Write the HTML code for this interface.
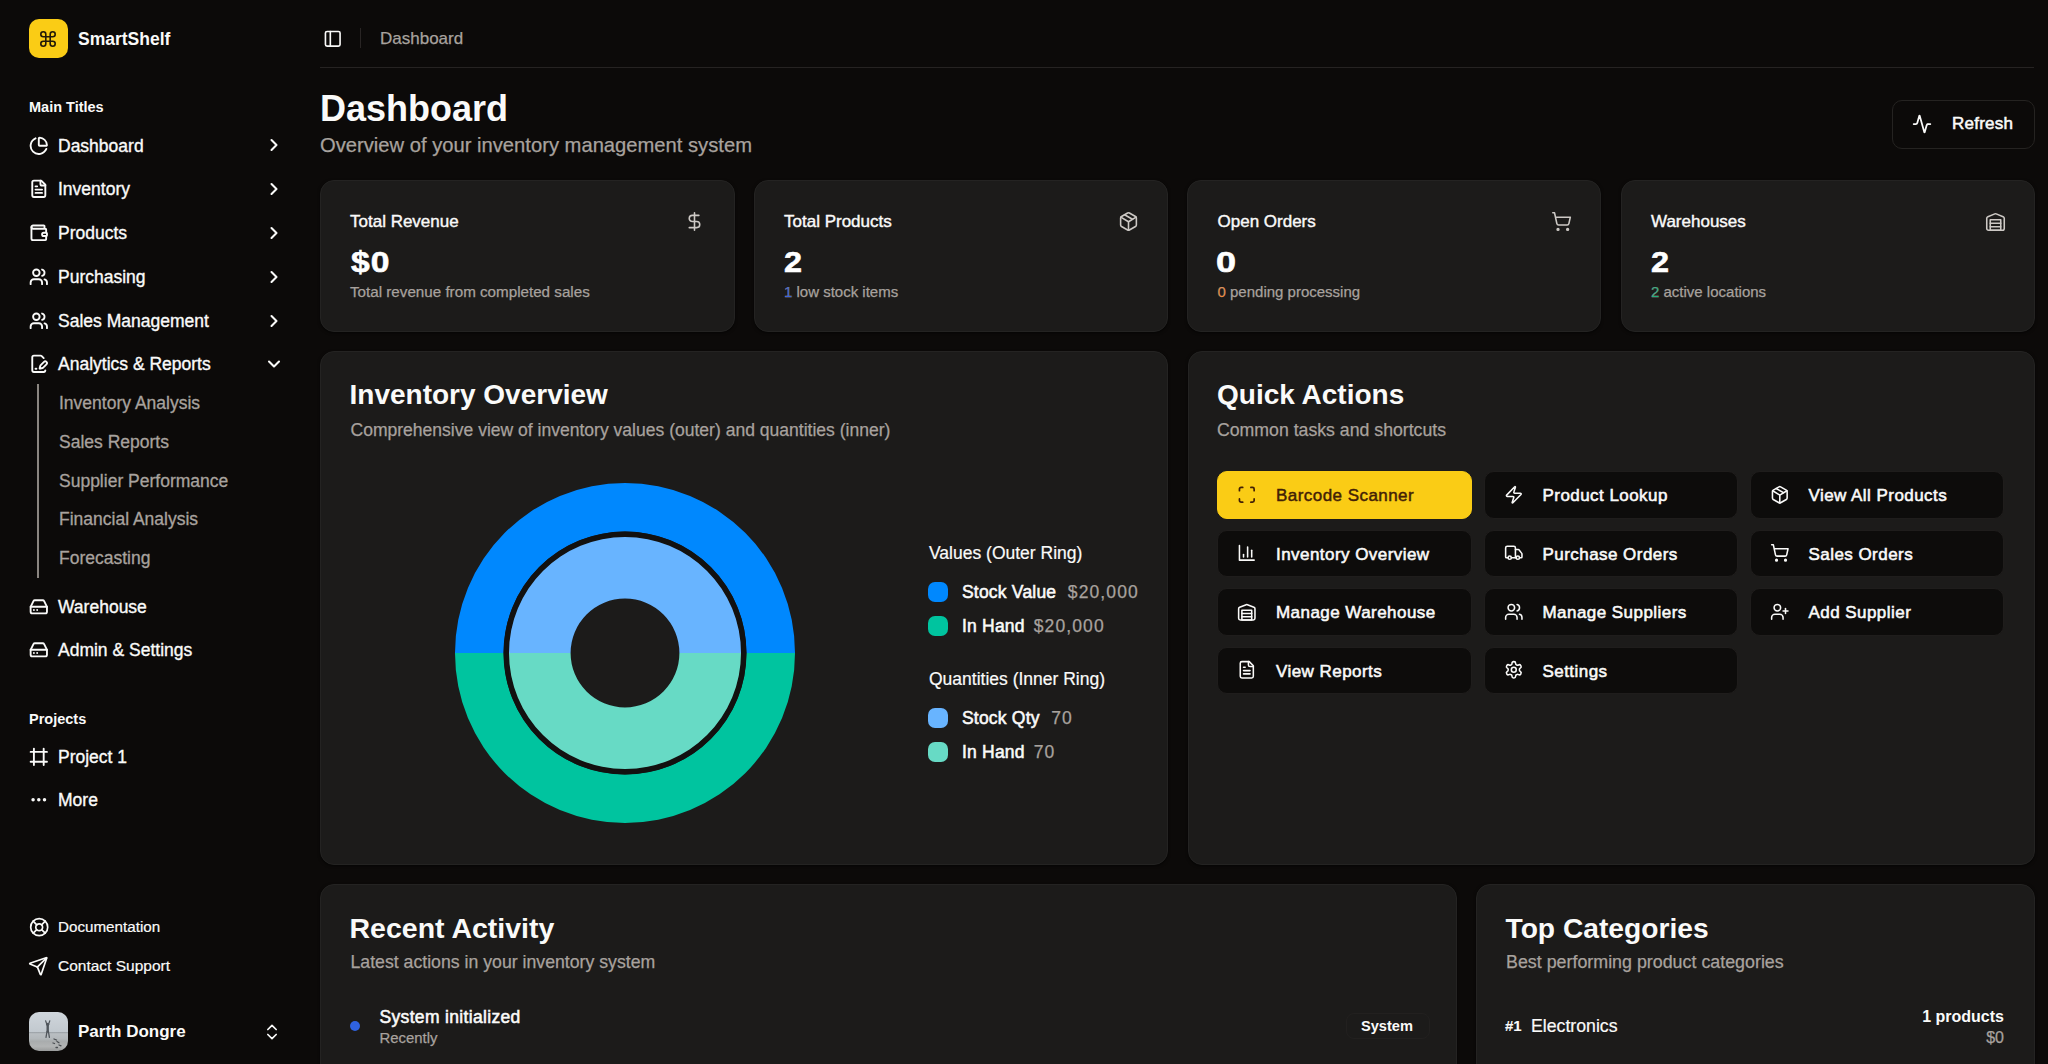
<!DOCTYPE html>
<html><head><meta charset="utf-8">
<style>
*{box-sizing:border-box;margin:0;padding:0}
html,body{width:2048px;height:1064px;overflow:hidden;background:#0c0a09;font-family:"Liberation Sans",sans-serif;color:#fafaf9}
.a{position:absolute;white-space:nowrap}
svg.i{position:absolute;fill:none;stroke:currentColor;stroke-width:2;stroke-linecap:round;stroke-linejoin:round}
.nav{font-size:17.5px;line-height:24px;height:24px;-webkit-text-stroke:0.35px #fafaf9}
.sub{font-size:17.5px;line-height:24px;height:24px;color:#a8a29e;-webkit-text-stroke:0.3px #a8a29e}
.gray{color:#a8a29e;-webkit-text-stroke:0.25px #a8a29e}
.card{position:absolute;background:#1c1b1a;border:1px solid #242322;border-radius:14px;box-shadow:0 1px 3px rgba(0,0,0,.6)}
.qb{position:absolute;width:254.5px;height:47.5px;border-radius:10px;background:#0d0c0b;border:1px solid #1f1d1c}
.qb span{position:absolute;left:58px;top:12px;font-size:17px;line-height:24px;font-weight:normal;-webkit-text-stroke:0.55px currentColor;letter-spacing:0.45px;white-space:nowrap}
.qb svg{left:19.3px;top:12.8px}
</style></head><body>

<!-- SIDEBAR -->
<div class="a" style="left:29px;top:19px;width:39px;height:39px;border-radius:10px;background:#facc15"></div>
<svg class="i" style="left:40.3px;top:30.7px;color:#231a08;stroke-width:1.6" width="16" height="16" viewBox="0 0 16 16"><path d="M10.2 3.3V12.7A2.5 2.5 0 1 0 12.7 10.2H3.3A2.5 2.5 0 1 0 5.8 12.7V3.3A2.5 2.5 0 1 0 3.3 5.8H12.7A2.5 2.5 0 1 0 10.2 3.3"/></svg>
<div class="a" style="left:78px;top:26.5px;font-size:17.5px;line-height:24px;font-weight:bold">SmartShelf</div>

<div class="a" style="left:29px;top:96.5px;font-size:14.5px;line-height:20px;font-weight:bold">Main Titles</div>

<svg class="i" style="left:29.2px;top:135.5px;stroke-width:2.3" width="19.6" height="19.6" viewBox="0 0 24 24"><path d="M21 12c.552 0 1.005-.449.95-.998a10 10 0 0 0-8.953-8.951c-.55-.055-.998.398-.998.95v8a1 1 0 0 0 1 1z"/><path d="M21.21 15.89A10 10 0 1 1 8 2.83"/></svg>
<div class="a nav" style="left:58px;top:133.6px">Dashboard</div>
<svg class="i" style="left:264px;top:135.3px;stroke-width:2.5" width="20" height="20" viewBox="0 0 24 24"><path d="m9 18 6-6-6-6"/></svg>
<svg class="i" style="left:29.2px;top:179.2px;stroke-width:2.3" width="19.6" height="19.6" viewBox="0 0 24 24"><path d="M15 2H6a2 2 0 0 0-2 2v16a2 2 0 0 0 2 2h12a2 2 0 0 0 2-2V7Z"/><path d="M14 2v4a2 2 0 0 0 2 2h4"/><path d="M10 9H8"/><path d="M16 13H8"/><path d="M16 17H8"/></svg>
<div class="a nav" style="left:58px;top:177.3px">Inventory</div>
<svg class="i" style="left:264px;top:179.0px;stroke-width:2.5" width="20" height="20" viewBox="0 0 24 24"><path d="m9 18 6-6-6-6"/></svg>
<svg class="i" style="left:29.2px;top:223.0px;stroke-width:2.3" width="19.6" height="19.6" viewBox="0 0 24 24"><path d="M19 7V4a1 1 0 0 0-1-1H5a2 2 0 0 0 0 4h15a1 1 0 0 1 1 1v4h-3a2 2 0 0 0 0 4h3a1 1 0 0 0 1-1v-2a1 1 0 0 0-1-1"/><path d="M3 5v14a2 2 0 0 0 2 2h15a1 1 0 0 0 1-1v-4"/></svg>
<div class="a nav" style="left:58px;top:221.1px">Products</div>
<svg class="i" style="left:264px;top:222.8px;stroke-width:2.5" width="20" height="20" viewBox="0 0 24 24"><path d="m9 18 6-6-6-6"/></svg>
<svg class="i" style="left:29.2px;top:266.8px;stroke-width:2.3" width="19.6" height="19.6" viewBox="0 0 24 24"><path d="M16 21v-2a4 4 0 0 0-4-4H6a4 4 0 0 0-4 4v2"/><circle cx="9" cy="7" r="4"/><path d="M22 21v-2a4 4 0 0 0-3-3.87"/><path d="M16 3.13a4 4 0 0 1 0 7.75"/></svg>
<div class="a nav" style="left:58px;top:264.9px">Purchasing</div>
<svg class="i" style="left:264px;top:266.6px;stroke-width:2.5" width="20" height="20" viewBox="0 0 24 24"><path d="m9 18 6-6-6-6"/></svg>
<svg class="i" style="left:29.2px;top:310.7px;stroke-width:2.3" width="19.6" height="19.6" viewBox="0 0 24 24"><path d="M16 21v-2a4 4 0 0 0-4-4H6a4 4 0 0 0-4 4v2"/><circle cx="9" cy="7" r="4"/><path d="M22 21v-2a4 4 0 0 0-3-3.87"/><path d="M16 3.13a4 4 0 0 1 0 7.75"/></svg>
<div class="a nav" style="left:58px;top:308.8px">Sales Management</div>
<svg class="i" style="left:264px;top:310.5px;stroke-width:2.5" width="20" height="20" viewBox="0 0 24 24"><path d="m9 18 6-6-6-6"/></svg>
<svg class="i" style="left:29.2px;top:353.9px;stroke-width:2.3" width="19.6" height="19.6" viewBox="0 0 24 24"><path d="m18 5-2.414-2.414A2 2 0 0 0 14.172 2H6a2 2 0 0 0-2 2v16a2 2 0 0 0 2 2h12a2 2 0 0 0 2-2"/><path d="M21.378 12.626a1 1 0 0 0-3.004-3.004l-4.01 4.012a2 2 0 0 0-.506.854l-.837 2.87a.5.5 0 0 0 .62.62l2.87-.837a2 2 0 0 0 .854-.506z"/><path d="M8 18h1"/></svg>
<div class="a nav" style="left:58px;top:352.0px">Analytics &amp; Reports</div>
<svg class="i" style="left:264px;top:353.7px;stroke-width:2.5" width="20" height="20" viewBox="0 0 24 24"><path d="m6 9 6 6 6-6"/></svg>
<svg class="i" style="left:29.2px;top:596.7px;stroke-width:2.3" width="19.6" height="19.6" viewBox="0 0 24 24"><line x1="22" x2="2" y1="12" y2="12"/><path d="M5.45 5.11 2 12v6a2 2 0 0 0 2 2h16a2 2 0 0 0 2-2v-6l-3.45-6.89A2 2 0 0 0 16.76 4H7.24a2 2 0 0 0-1.79 1.11z"/><line x1="6" x2="6.01" y1="16" y2="16"/><line x1="10" x2="10.01" y1="16" y2="16"/></svg>
<div class="a nav" style="left:58px;top:594.8px">Warehouse</div>
<svg class="i" style="left:29.2px;top:640.2px;stroke-width:2.3" width="19.6" height="19.6" viewBox="0 0 24 24"><line x1="22" x2="2" y1="12" y2="12"/><path d="M5.45 5.11 2 12v6a2 2 0 0 0 2 2h16a2 2 0 0 0 2-2v-6l-3.45-6.89A2 2 0 0 0 16.76 4H7.24a2 2 0 0 0-1.79 1.11z"/><line x1="6" x2="6.01" y1="16" y2="16"/><line x1="10" x2="10.01" y1="16" y2="16"/></svg>
<div class="a nav" style="left:58px;top:638.3px">Admin &amp; Settings</div>
<svg class="i" style="left:29.2px;top:747.2px;stroke-width:2.3" width="19.6" height="19.6" viewBox="0 0 24 24"><line x1="22" x2="2" y1="6" y2="6"/><line x1="22" x2="2" y1="18" y2="18"/><line x1="6" x2="6" y1="2" y2="22"/><line x1="18" x2="18" y1="2" y2="22"/></svg>
<div class="a nav" style="left:58px;top:745.3px">Project 1</div>
<svg class="i" style="left:29.2px;top:790.2px;stroke-width:2.3" width="19.6" height="19.6" viewBox="0 0 24 24"><circle cx="12" cy="12" r="1"/><circle cx="19" cy="12" r="1"/><circle cx="5" cy="12" r="1"/></svg>
<div class="a nav" style="left:58px;top:788.3px">More</div>
<div class="a" style="left:37px;top:384px;width:1.5px;height:193.5px;background:#8a8580"></div>
<div class="a sub" style="left:59px;top:391.3px">Inventory Analysis</div>
<div class="a sub" style="left:59px;top:429.8px">Sales Reports</div>
<div class="a sub" style="left:59px;top:468.8px">Supplier Performance</div>
<div class="a sub" style="left:59px;top:507.3px">Financial Analysis</div>
<div class="a sub" style="left:59px;top:546.3px">Forecasting</div>
<div class="a" style="left:29px;top:708.5px;font-size:14.5px;line-height:20px;font-weight:bold">Projects</div>
<svg class="i" style="left:28.5px;top:916.5px;stroke-width:2" width="20.4" height="20.4" viewBox="0 0 24 24"><circle cx="12" cy="12" r="10"/><path d="m4.93 4.93 4.24 4.24"/><path d="m14.83 9.17 4.24-4.24"/><path d="m14.83 14.83 4.24 4.24"/><path d="m9.17 14.83-4.24 4.24"/><circle cx="12" cy="12" r="4"/></svg>
<div class="a" style="left:58px;top:916.3px;font-size:15.2px;line-height:21px;-webkit-text-stroke:0.2px #fafaf9">Documentation</div>
<svg class="i" style="left:28px;top:955.5px;stroke-width:2" width="20.4" height="20.4" viewBox="0 0 24 24"><path d="M14.536 21.686a.5.5 0 0 0 .937-.024l6.5-19a.496.496 0 0 0-.635-.635l-19 6.5a.5.5 0 0 0-.024.937l7.93 3.18a2 2 0 0 1 1.112 1.11z"/><path d="m21.854 2.147-10.94 10.939"/></svg>
<div class="a" style="left:58px;top:955.3px;font-size:15.5px;line-height:21px;-webkit-text-stroke:0.2px #fafaf9">Contact Support</div>
<div class="a" style="left:29px;top:1012px;width:39px;height:39px;border-radius:10px;overflow:hidden;background:linear-gradient(180deg,#d0d6dc 0%,#c2c9cf 50%,#9fa5aa 52.5%,#b9bec2 56%,#b3b8bb 68%,#a9acad 75%,#b2b4b4 88%,#999b9b 100%)">
  <svg style="position:absolute;left:0;top:0" width="39" height="39" viewBox="0 0 39 39"><g stroke="#50565c" stroke-linecap="round" fill="none"><path d="M16.6 8.8 L18 12.8 M20.8 8.8 L19.4 12.8" stroke-width="1.2"/><path d="M18.7 13 V19.5" stroke-width="2.4"/><path d="M18 19.5 L17 25.3 M19.4 19.5 L20.4 25.3" stroke-width="1.3"/></g><circle cx="18.7" cy="12.2" r="1.5" fill="#50565c"/><path d="M25 27 l2.5 1 M28 29.5 l2 1.2 M30 33 l2 .8 M24 31 l1.5 .5 M27 35.5 l1.5 0" stroke="#4a4e52" stroke-width="1.3" stroke-linecap="round"/></svg>
</div>
<div class="a" style="left:78px;top:1020px;font-size:17px;line-height:24px;font-weight:bold">Parth Dongre</div>
<svg class="i" style="left:262px;top:1021.5px;stroke-width:2" width="20" height="20" viewBox="0 0 24 24"><path d="m7 15 5 5 5-5"/><path d="m7 9 5-5 5 5"/></svg>

<!-- HEADER -->
<svg class="i" style="left:322.9px;top:29.2px;stroke-width:2" width="19.5" height="19.5" viewBox="0 0 24 24"><rect width="18" height="18" x="3" y="3" rx="2"/><path d="M9 3v18"/></svg>
<div class="a" style="left:359.5px;top:28px;width:1px;height:20px;background:#292524"></div>
<div class="a gray" style="left:380px;top:26.5px;font-size:17px;line-height:24px">Dashboard</div>
<div class="a" style="left:320px;top:67px;width:1714px;height:1px;background:#262322"></div>

<div class="a" style="left:320px;top:88.5px;font-size:36px;line-height:40px;font-weight:bold">Dashboard</div>
<div class="a gray" style="left:320px;top:132.5px;font-size:20.2px;line-height:24px">Overview of your inventory management system</div>

<div class="a" style="left:1892px;top:99.5px;width:142.5px;height:49px;border:1.6px solid #252321;border-radius:10px"></div>
<svg class="i" style="left:1911.9px;top:113.8px;stroke-width:2.1" width="20" height="20" viewBox="0 0 24 24"><path d="M22 12h-2.48a2 2 0 0 0-1.93 1.46l-2.35 8.36a.25.25 0 0 1-.48 0L9.24 2.18a.25.25 0 0 0-.48 0l-2.35 8.36A2 2 0 0 1 4.49 12H2"/></svg>
<div class="a" style="left:1952px;top:111.5px;font-size:17px;line-height:24px;-webkit-text-stroke:0.55px #fafaf9;letter-spacing:0.25px">Refresh</div>

<div class="card" style="left:320px;top:179.5px;width:414.5px;height:152px"></div>
<div class="a" style="left:350px;top:209.5px;font-size:17px;line-height:24px;-webkit-text-stroke:0.4px #fafaf9">Total Revenue</div>
<div class="a" style="left:350px;top:244px;font-size:30px;line-height:36px;font-weight:bold;color:#fff;-webkit-text-stroke:0.6px #fff;letter-spacing:1px;transform:scaleX(1.12);transform-origin:0 0;margin-left:1px">$0</div>
<div class="a gray" style="left:350px;top:281px;font-size:15.2px;line-height:21px">Total revenue from completed sales</div>
<svg class="i" style="left:683.5px;top:211px;color:#cdc9c5;stroke-width:1.8" width="21" height="21" viewBox="0 0 24 24"><line x1="12" x2="12" y1="2" y2="22"/><path d="M17 5H9.5a3.5 3.5 0 0 0 0 7h5a3.5 3.5 0 0 1 0 7H6"/></svg>
<div class="card" style="left:753.5px;top:179.5px;width:414.5px;height:152px"></div>
<div class="a" style="left:784px;top:209.5px;font-size:17px;line-height:24px;-webkit-text-stroke:0.4px #fafaf9">Total Products</div>
<div class="a" style="left:784px;top:244px;font-size:30px;line-height:36px;font-weight:bold;color:#fff;-webkit-text-stroke:0.6px #fff;transform:scaleX(1.08);transform-origin:0 0">2</div>
<div class="a gray" style="left:784px;top:281px;font-size:15px;line-height:21px"><span style="color:#3b63dc">1</span> low stock items</div>
<svg class="i" style="left:1117.5px;top:211px;color:#cdc9c5;stroke-width:1.8" width="21" height="21" viewBox="0 0 24 24"><path d="M11 21.73a2 2 0 0 0 2 0l7-4A2 2 0 0 0 21 16V8a2 2 0 0 0-1-1.73l-7-4a2 2 0 0 0-2 0l-7 4A2 2 0 0 0 3 8v8a2 2 0 0 0 1 1.73z"/><path d="M12 22V12"/><path d="m3.3 7 7.703 4.734a2 2 0 0 0 1.994 0L20.7 7"/><path d="m7.5 4.27 9 5.15"/></svg>
<div class="card" style="left:1187px;top:179.5px;width:414px;height:152px"></div>
<div class="a" style="left:1217.5px;top:209.5px;font-size:17px;line-height:24px;-webkit-text-stroke:0.4px #fafaf9">Open Orders</div>
<div class="a" style="left:1217.5px;top:244px;font-size:30px;line-height:36px;font-weight:bold;color:#fff;-webkit-text-stroke:0.6px #fff;transform:scaleX(1.2);transform-origin:0 0;margin-left:-1.5px">0</div>
<div class="a gray" style="left:1217.5px;top:281px;font-size:15px;line-height:21px"><span style="color:#f08a3c">0</span> pending processing</div>
<svg class="i" style="left:1551.0px;top:211px;color:#cdc9c5;stroke-width:1.8" width="21" height="21" viewBox="0 0 24 24"><circle cx="8" cy="21" r="1"/><circle cx="19" cy="21" r="1"/><path d="M2.05 2.05h2l2.66 12.42a2 2 0 0 0 2 1.58h9.78a2 2 0 0 0 1.95-1.57l1.65-7.43H5.12"/></svg>
<div class="card" style="left:1621px;top:179.5px;width:413.6px;height:152px"></div>
<div class="a" style="left:1651px;top:209.5px;font-size:17px;line-height:24px;-webkit-text-stroke:0.4px #fafaf9">Warehouses</div>
<div class="a" style="left:1651px;top:244px;font-size:30px;line-height:36px;font-weight:bold;color:#fff;-webkit-text-stroke:0.6px #fff;transform:scaleX(1.08);transform-origin:0 0">2</div>
<div class="a gray" style="left:1651px;top:281px;font-size:15px;line-height:21px"><span style="color:#22b07d">2</span> active locations</div>
<svg class="i" style="left:1984.5px;top:211px;color:#cdc9c5;stroke-width:1.8" width="21" height="21" viewBox="0 0 24 24"><path d="M22 8.35V20a2 2 0 0 1-2 2H4a2 2 0 0 1-2-2V8.35A2 2 0 0 1 3.26 6.5l8-3.2a2 2 0 0 1 1.48 0l8 3.2A2 2 0 0 1 22 8.35Z"/><path d="M6 18h12"/><path d="M6 14h12"/><rect width="12" height="12" x="6" y="10"/></svg>

<!-- INVENTORY OVERVIEW -->
<div class="card" style="left:320px;top:351px;width:847.5px;height:513.5px"></div>
<div class="a" style="left:349.5px;top:378.5px;font-size:28px;line-height:32px;font-weight:bold">Inventory Overview</div>
<div class="a gray" style="left:350.5px;top:417.6px;font-size:17.55px;line-height:24px">Comprehensive view of inventory values (outer) and quantities (inner)</div>
<svg class="a" style="left:454.7px;top:483px" width="340" height="340" viewBox="-170 -170 340 340">
  <path d="M-170 0A170 170 0 0 1 170 0H121.4A121.4 121.4 0 0 0 -121.4 0Z" fill="#0088fe"/>
  <path d="M-170 0A170 170 0 0 0 170 0H121.4A121.4 121.4 0 0 1 -121.4 0Z" fill="#00c49f"/>
  <circle r="118.7" fill="none" stroke="#121110" stroke-width="5.6"/>
  <path d="M-116 0A116 116 0 0 1 116 0H54.4A54.4 54.4 0 0 0 -54.4 0Z" fill="#68b4ff"/>
  <path d="M-116 0A116 116 0 0 0 116 0H54.4A54.4 54.4 0 0 1 -54.4 0Z" fill="#67dac5"/>
</svg>
<div class="a" style="left:929px;top:541.3px;font-size:17.5px;line-height:24px;-webkit-text-stroke:0.2px #fafaf9">Values (Outer Ring)</div>
<div class="a" style="left:928px;top:582.3px;width:20px;height:19.5px;border-radius:7px;background:#0088fe"></div>
<div class="a" style="left:962px;top:580.3px;font-size:17.5px;line-height:24px;-webkit-text-stroke:0.55px #fafaf9;letter-spacing:0.2px">Stock Value <span style="color:#a8a29e;-webkit-text-stroke:0.25px #a8a29e;letter-spacing:1.1px;margin-left:6.5px">$20,000</span></div>
<div class="a" style="left:928px;top:616.3px;width:20px;height:19.5px;border-radius:7px;background:#00c49f"></div>
<div class="a" style="left:962px;top:614.3px;font-size:17.5px;line-height:24px;-webkit-text-stroke:0.55px #fafaf9;letter-spacing:0.2px">In Hand <span style="color:#a8a29e;-webkit-text-stroke:0.25px #a8a29e;letter-spacing:1.1px;margin-left:4px">$20,000</span></div>
<div class="a" style="left:929px;top:667.3px;font-size:17.5px;line-height:24px;-webkit-text-stroke:0.2px #fafaf9">Quantities (Inner Ring)</div>
<div class="a" style="left:928px;top:708.3px;width:20px;height:19.5px;border-radius:7px;background:#68b4ff"></div>
<div class="a" style="left:962px;top:706.3px;font-size:17.5px;line-height:24px;-webkit-text-stroke:0.55px #fafaf9;letter-spacing:0.2px">Stock Qty <span style="color:#a8a29e;-webkit-text-stroke:0.25px #a8a29e;letter-spacing:1.1px;margin-left:6.5px">70</span></div>
<div class="a" style="left:928px;top:742.3px;width:20px;height:19.5px;border-radius:7px;background:#67dac5"></div>
<div class="a" style="left:962px;top:740.3px;font-size:17.5px;line-height:24px;-webkit-text-stroke:0.55px #fafaf9;letter-spacing:0.2px">In Hand <span style="color:#a8a29e;-webkit-text-stroke:0.25px #a8a29e;letter-spacing:1.1px;margin-left:4px">70</span></div>
<!-- QUICK ACTIONS -->
<div class="card" style="left:1187.5px;top:351px;width:847px;height:513.5px"></div>
<div class="a" style="left:1217px;top:378.5px;font-size:28px;line-height:32px;font-weight:bold">Quick Actions</div>
<div class="a gray" style="left:1217px;top:417.6px;font-size:17.7px;line-height:24px">Common tasks and shortcuts</div>
<div class="qb" style="left:1217px;top:471px;background:#facc15;border-color:#facc15;color:#422006"><svg class="i" width="19.6" height="19.6" viewBox="0 0 24 24" style="stroke-width:2.1"><path d="M3 7V5a2 2 0 0 1 2-2h2"/><path d="M17 3h2a2 2 0 0 1 2 2v2"/><path d="M21 17v2a2 2 0 0 1-2 2h-2"/><path d="M7 21H5a2 2 0 0 1-2-2v-2"/></svg><span style="-webkit-text-stroke:0.45px #422006">Barcode Scanner</span></div>
<div class="qb" style="left:1483.5px;top:471px"><svg class="i" width="19.6" height="19.6" viewBox="0 0 24 24" style="stroke-width:1.9"><path d="M4 14a1 1 0 0 1-.78-1.63l9.9-10.2a.5.5 0 0 1 .86.46l-1.92 6.02A1 1 0 0 0 13 10h7a1 1 0 0 1 .78 1.63l-9.9 10.2a.5.5 0 0 1-.86-.46l1.92-6.02A1 1 0 0 0 11 14z"/></svg><span>Product Lookup</span></div>
<div class="qb" style="left:1749.5px;top:471px"><svg class="i" width="19.6" height="19.6" viewBox="0 0 24 24" style="stroke-width:1.9"><path d="M11 21.73a2 2 0 0 0 2 0l7-4A2 2 0 0 0 21 16V8a2 2 0 0 0-1-1.73l-7-4a2 2 0 0 0-2 0l-7 4A2 2 0 0 0 3 8v8a2 2 0 0 0 1 1.73z"/><path d="M12 22V12"/><path d="m3.3 7 7.703 4.734a2 2 0 0 0 1.994 0L20.7 7"/><path d="m7.5 4.27 9 5.15"/></svg><span>View All Products</span></div>
<div class="qb" style="left:1217px;top:529.5px"><svg class="i" width="19.6" height="19.6" viewBox="0 0 24 24" style="stroke-width:1.9"><path d="M3 3v18h18"/><path d="M18 17V9"/><path d="M13 17V5"/><path d="M8 17v-3"/></svg><span>Inventory Overview</span></div>
<div class="qb" style="left:1483.5px;top:529.5px"><svg class="i" width="19.6" height="19.6" viewBox="0 0 24 24" style="stroke-width:1.9"><path d="M14 18V6a2 2 0 0 0-2-2H4a2 2 0 0 0-2 2v11a1 1 0 0 0 1 1h2"/><path d="M15 18H9"/><path d="M19 18h2a1 1 0 0 0 1-1v-3.65a1 1 0 0 0-.22-.624l-3.48-4.35A1 1 0 0 0 17.52 8H14"/><circle cx="17" cy="18" r="2"/><circle cx="7" cy="18" r="2"/></svg><span>Purchase Orders</span></div>
<div class="qb" style="left:1749.5px;top:529.5px"><svg class="i" width="19.6" height="19.6" viewBox="0 0 24 24" style="stroke-width:1.9"><circle cx="8" cy="21" r="1"/><circle cx="19" cy="21" r="1"/><path d="M2.05 2.05h2l2.66 12.42a2 2 0 0 0 2 1.58h9.78a2 2 0 0 0 1.95-1.57l1.65-7.43H5.12"/></svg><span>Sales Orders</span></div>
<div class="qb" style="left:1217px;top:588px"><svg class="i" width="19.6" height="19.6" viewBox="0 0 24 24" style="stroke-width:1.9"><path d="M22 8.35V20a2 2 0 0 1-2 2H4a2 2 0 0 1-2-2V8.35A2 2 0 0 1 3.26 6.5l8-3.2a2 2 0 0 1 1.48 0l8 3.2A2 2 0 0 1 22 8.35Z"/><path d="M6 18h12"/><path d="M6 14h12"/><rect width="12" height="12" x="6" y="10"/></svg><span>Manage Warehouse</span></div>
<div class="qb" style="left:1483.5px;top:588px"><svg class="i" width="19.6" height="19.6" viewBox="0 0 24 24" style="stroke-width:1.9"><path d="M16 21v-2a4 4 0 0 0-4-4H6a4 4 0 0 0-4 4v2"/><circle cx="9" cy="7" r="4"/><path d="M22 21v-2a4 4 0 0 0-3-3.87"/><path d="M16 3.13a4 4 0 0 1 0 7.75"/></svg><span>Manage Suppliers</span></div>
<div class="qb" style="left:1749.5px;top:588px"><svg class="i" width="19.6" height="19.6" viewBox="0 0 24 24" style="stroke-width:1.9"><path d="M16 21v-2a4 4 0 0 0-4-4H6a4 4 0 0 0-4 4v2"/><circle cx="9" cy="7" r="4"/><line x1="19" x2="19" y1="8" y2="14"/><line x1="22" x2="16" y1="11" y2="11"/></svg><span>Add Supplier</span></div>
<div class="qb" style="left:1217px;top:646.5px"><svg class="i" width="19.6" height="19.6" viewBox="0 0 24 24" style="stroke-width:1.9"><path d="M15 2H6a2 2 0 0 0-2 2v16a2 2 0 0 0 2 2h12a2 2 0 0 0 2-2V7Z"/><path d="M14 2v4a2 2 0 0 0 2 2h4"/><path d="M10 9H8"/><path d="M16 13H8"/><path d="M16 17H8"/></svg><span>View Reports</span></div>
<div class="qb" style="left:1483.5px;top:646.5px"><svg class="i" width="19.6" height="19.6" viewBox="0 0 24 24" style="stroke-width:1.9"><path d="M12.22 2h-.44a2 2 0 0 0-2 2v.18a2 2 0 0 1-1 1.73l-.43.25a2 2 0 0 1-2 0l-.15-.08a2 2 0 0 0-2.73.73l-.22.38a2 2 0 0 0 .73 2.73l.15.1a2 2 0 0 1 1 1.72v.51a2 2 0 0 1-1 1.74l-.15.09a2 2 0 0 0-.73 2.73l.22.38a2 2 0 0 0 2.73.73l.15-.08a2 2 0 0 1 2 0l.43.25a2 2 0 0 1 1 1.73V20a2 2 0 0 0 2 2h.44a2 2 0 0 0 2-2v-.18a2 2 0 0 1 1-1.73l.43-.25a2 2 0 0 1 2 0l.15.08a2 2 0 0 0 2.73-.73l.22-.39a2 2 0 0 0-.73-2.73l-.15-.08a2 2 0 0 1-1-1.74v-.5a2 2 0 0 1 1-1.74l.15-.09a2 2 0 0 0 .73-2.73l-.22-.38a2 2 0 0 0-2.73-.73l-.15.08a2 2 0 0 1-2 0l-.43-.25a2 2 0 0 1-1-1.73V4a2 2 0 0 0-2-2z"/><circle cx="12" cy="12" r="3"/></svg><span>Settings</span></div>
<!-- RECENT ACTIVITY -->
<div class="card" style="left:320px;top:884px;width:1136.5px;height:260px"></div>
<div class="a" style="left:349.5px;top:912px;font-size:28.5px;line-height:32px;font-weight:bold">Recent Activity</div>
<div class="a gray" style="left:350.5px;top:950.3px;font-size:17.7px;line-height:24px">Latest actions in your inventory system</div>
<div class="a" style="left:350.2px;top:1021px;width:10px;height:10px;border-radius:50%;background:#2f62e0"></div>
<div class="a" style="left:379.5px;top:1004.5px;font-size:17.5px;line-height:24px;-webkit-text-stroke:0.55px #fafaf9;letter-spacing:0.33px">System initialized</div>
<div class="a gray" style="left:379.5px;top:1027.5px;font-size:14.9px;line-height:21px">Recently</div>
<div class="a" style="left:1346px;top:1012.5px;width:84px;height:26.5px;border-radius:8px;border:1px solid #22201f"></div>
<div class="a" style="left:1361px;top:1015.5px;font-size:14.6px;line-height:20px;font-weight:bold">System</div>

<!-- TOP CATEGORIES -->
<div class="card" style="left:1476px;top:884px;width:558.5px;height:260px"></div>
<div class="a" style="left:1505.5px;top:912px;font-size:28.2px;line-height:32px;font-weight:bold">Top Categories</div>
<div class="a gray" style="left:1506px;top:950.3px;font-size:17.85px;line-height:24px">Best performing product categories</div>
<div class="a" style="left:1505px;top:1015px;font-size:15px;line-height:22px;font-weight:bold;-webkit-text-stroke:0.1px #fafaf9">#1</div>
<div class="a" style="left:1531px;top:1014.3px;font-size:17.7px;line-height:24px;-webkit-text-stroke:0.2px #fafaf9">Electronics</div>
<div class="a" style="right:44px;top:1004.5px;font-size:16px;line-height:24px;font-weight:bold;text-align:right">1 products</div>
<div class="a gray" style="right:44px;top:1027.3px;font-size:16px;line-height:21px;text-align:right">$0</div>

</body></html>
